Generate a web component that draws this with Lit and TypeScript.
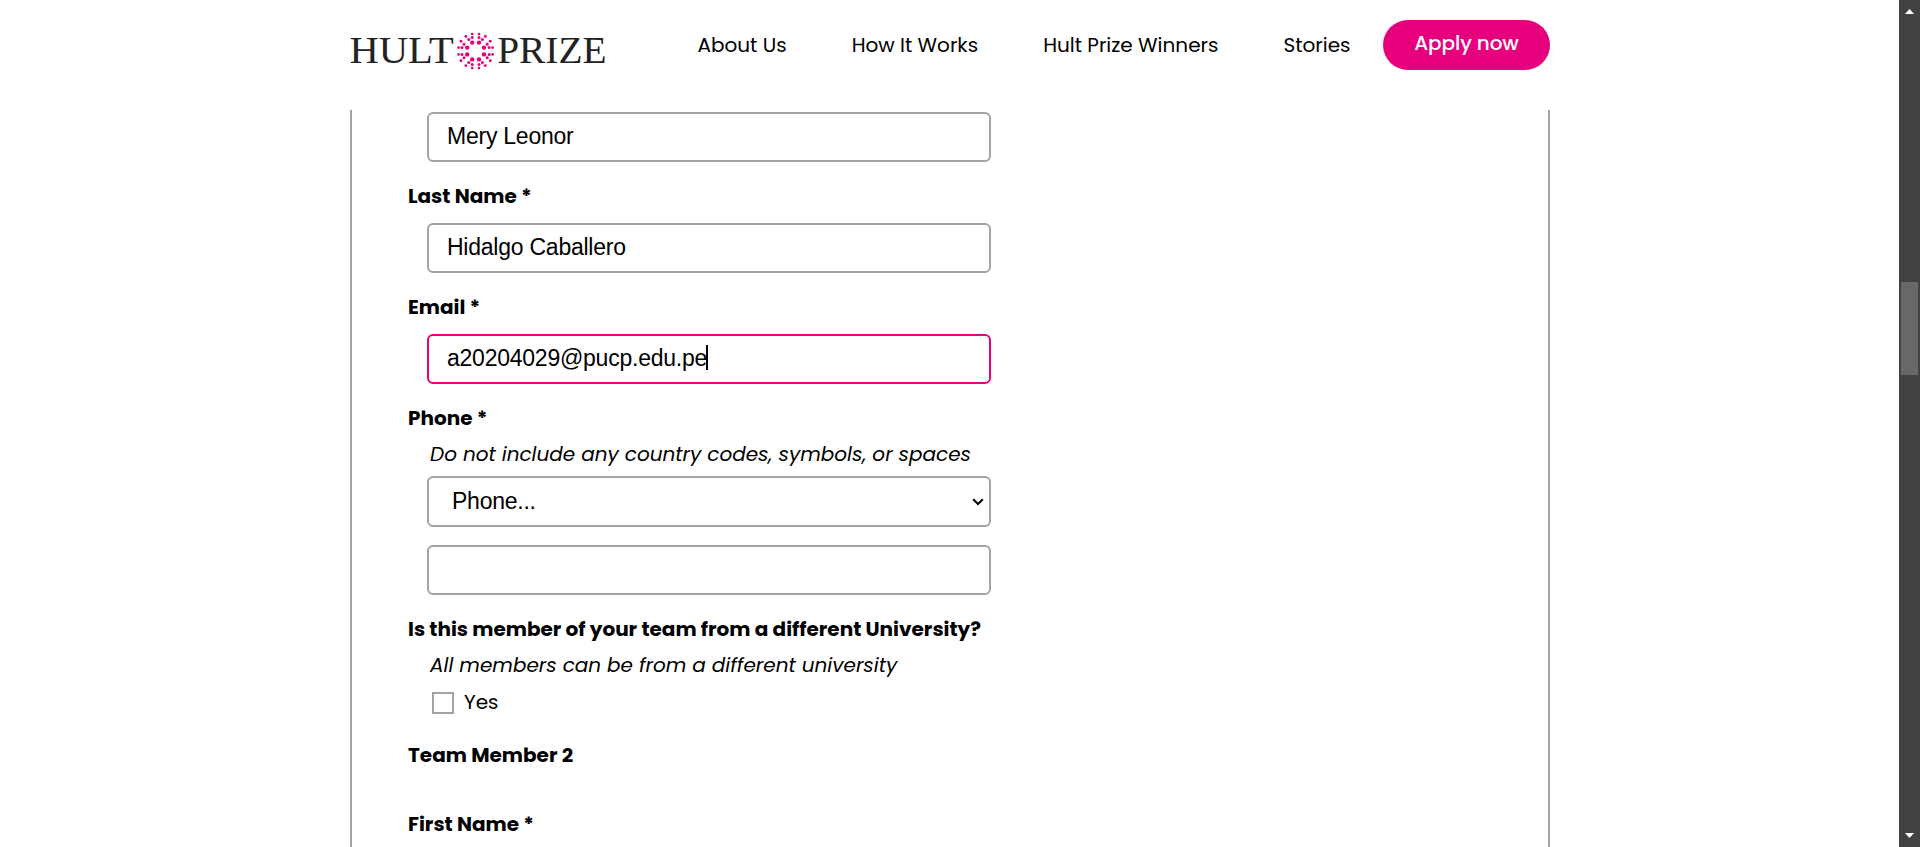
import { LitElement, html, svg, css } from "lit";
import { customElement } from "lit/decorators.js";

@customElement("hult-logo")
class HultLogo extends LitElement {
  static styles = css`
    :host { display: block; }
    svg { display: block; overflow: visible; }
    .word { font-family: "Liberation Serif", serif; font-size: 37.3px; fill: #222; }
    .dots { fill: #e6007e; }
  `;
  render() {
    const rings: [number, number, number][] = [
      [3.4, 8.4, 2.2],
      [3.4, 13.6, 1.5],
      [6.8, 11.6, 1.5],
      [3.4, 17, 1.35],
      [9.7, 14.6, 1.45],
    ];
    const dots = rings.flatMap(([a, b, r]) =>
      [1, -1].flatMap((sx) =>
        [1, -1].flatMap((sy) => [
          svg`<circle cx=${a * sx} cy=${b * sy} r=${r}></circle>`,
          svg`<circle cx=${b * sx} cy=${a * sy} r=${r}></circle>`,
        ])
      )
    );
    return html`<svg width="258" height="40" viewBox="0 0 258 40">
      <text class="word" x="-0.6" y="32" textLength="104.5" lengthAdjust="spacingAndGlyphs">HULT</text>
      <g class="dots" transform="translate(125.6 20)">${dots}</g>
      <text class="word" x="147.2" y="32" textLength="109.3" lengthAdjust="spacingAndGlyphs">PRIZE</text>
    </svg>`;
  }
}

@customElement("app-root")
class AppRoot extends LitElement {
  static styles = css`
    :host {
      display: flex; height: 847px; overflow: hidden; background: #fff; color: #000;
      font: 20px/30px Poppins, Inter, sans-serif;
    }
    * { box-sizing: border-box; }
    .page { flex: 1; display: flex; flex-direction: column; padding-left: 350px; }
    .header { width: 1200px; height: 110px; display: flex; align-items: flex-start; flex: none; }
    .logo { margin-top: 31px; width: 347.5px; }
    .nav { display: flex; width: 685.5px; gap: 65px; margin-top: 30px; white-space: nowrap; }
    .apply {
      width: 167px; height: 50px; margin-top: 20px; border-radius: 25px; background: #e6007e; color: #fff;
      font-weight: 500; letter-spacing: -0.1px; display: flex; justify-content: center; padding-top: 8px;
    }
    .form {
      width: 1200px; flex: 1; border: solid #a3a3a3; border-width: 0 2px;
      padding: 2px 0 0 55px; display: flex; flex-direction: column; min-height: 0;
    }
    .label { font-weight: 700; height: 30px; flex: none; margin: 19px 0 12px; padding-left: 1px; }
    .label.tight { margin-bottom: 6px; }
    .hint { font-style: italic; height: 30px; flex: none; padding-left: 23px; margin-bottom: 7px; }
    .field {
      width: 564px; height: 50px; flex: none; margin-left: 20px; padding: 0 0 3px 18px;
      border: 2px solid #a3a3a3; border-radius: 6px; display: flex; align-items: center;
      font: 23px/26px "Liberation Sans", Arial, sans-serif; letter-spacing: -0.24px;
    }
    .field.active { border-color: #e6007e; }
    .caret { width: 2px; height: 25px; background: #000; margin-left: -1px; }
    .field.select { height: 51px; margin-bottom: 18px; padding: 0 5px 2px 23px; justify-content: space-between; }
    .chevron { display: block; margin-top: 2px; }
    .check { display: flex; align-items: flex-start; gap: 10px; padding-left: 25px; height: 30px; flex: none; }
    .box { width: 22px; height: 22px; border: 2px solid #a3a3a3; margin-top: 5px; }
    .label.team { margin: 23px 0 39px; }
    .label.last { margin: 0; }
    .scroll {
      width: 21px; background: #424242; display: flex; flex-direction: column;
      align-items: center; padding: 9px 0; flex: none;
    }
    .thumb { width: 17px; height: 93px; background: #686868; margin: 268px 0 auto; }
    .scroll svg { display: block; flex: none; }
  `;
  render() {
    return html`
      <div class="page">
        <div class="header">
          <div class="logo"><hult-logo></hult-logo></div>
          <div class="nav">
            <span>About Us</span><span>How It Works</span><span>Hult Prize Winners</span><span>Stories</span>
          </div>
          <div class="apply">Apply now</div>
        </div>
        <div class="form">
          <div class="field">Mery Leonor</div>
          <div class="label">Last Name *</div>
          <div class="field">Hidalgo Caballero</div>
          <div class="label">Email *</div>
          <div class="field active">a20204029@pucp.edu.pe<span class="caret"></span></div>
          <div class="label tight">Phone *</div>
          <div class="hint">Do not include any country codes, symbols, or spaces</div>
          <div class="field select">
            <span>Phone...</span>
            <svg class="chevron" width="12" height="8" viewBox="0 0 12 8">
              <path d="M1.2 1.2 L6 6 L10.8 1.2" fill="none" stroke="#000" stroke-width="2"></path>
            </svg>
          </div>
          <div class="field"></div>
          <div class="label tight">Is this member of your team from a different University?</div>
          <div class="hint">All members can be from a different university</div>
          <div class="check"><span class="box"></span>Yes</div>
          <div class="label team">Team Member 2</div>
          <div class="label last">First Name *</div>
        </div>
      </div>
      <div class="scroll">
        <svg width="9" height="5" viewBox="0 0 9 5"><path d="M0 5 L4.5 0 L9 5Z" fill="#fff"></path></svg>
        <div class="thumb"></div>
        <svg width="9" height="5" viewBox="0 0 9 5"><path d="M0 0 L4.5 5 L9 0Z" fill="#fff"></path></svg>
      </div>
    `;
  }
}
